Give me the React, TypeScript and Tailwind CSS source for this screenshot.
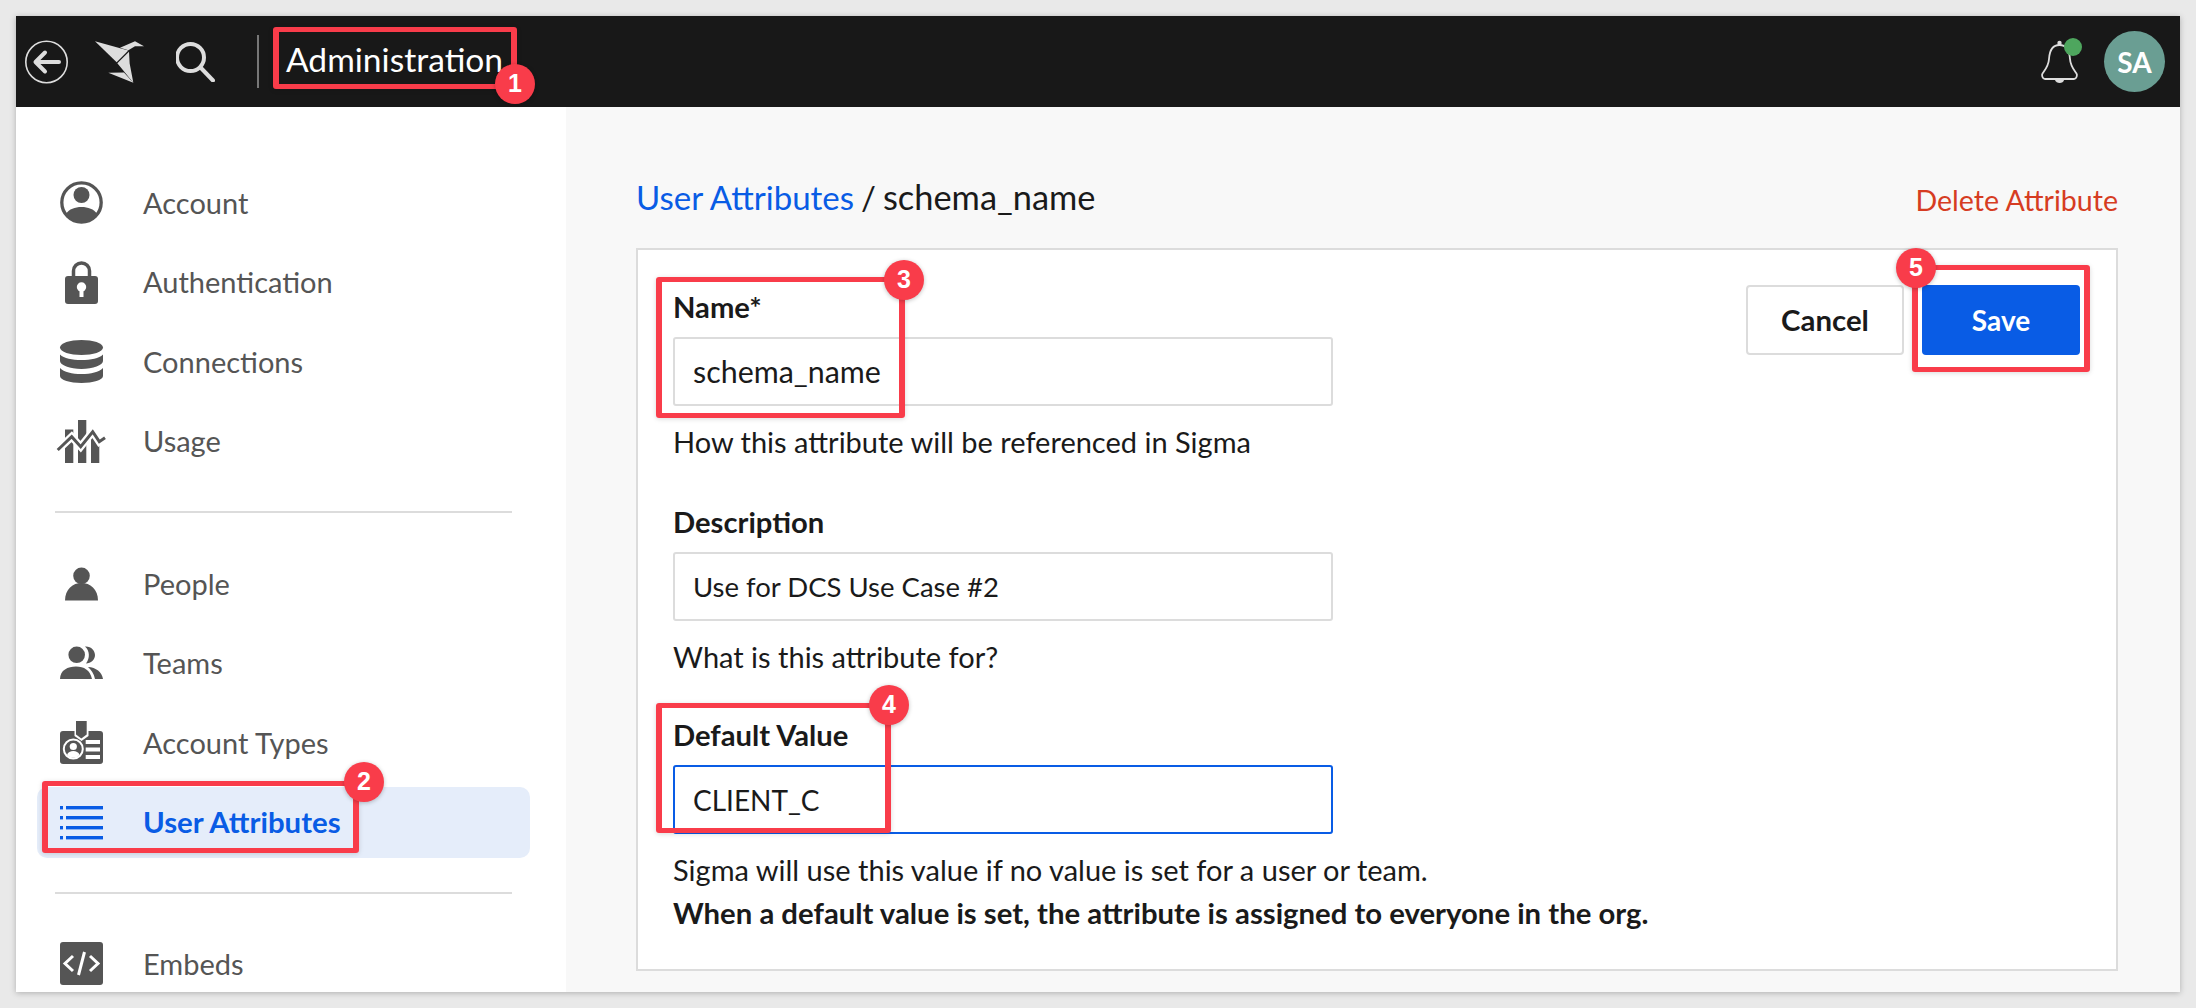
import React from "react";

const I = ({ children }: { children: React.ReactNode }) => (
  <svg width="43" height="43" viewBox="0 0 43 43" fill="currentColor" className="shrink-0 overflow-visible">
    {children}
  </svg>
);

const AccountIcon = () => (
  <I>
    <circle cx="21.5" cy="21.5" r="19.7" fill="none" stroke="currentColor" strokeWidth="3.3" />
    <circle cx="21.5" cy="14" r="8" />
    <path d="M6 33 C9 28 15 26 21.5 26 S34 28 37 33 A19 19 0 0 1 6 33Z" />
  </I>
);
const LockIcon = () => (
  <I>
    <path d="M13.5 18 V10 A8 8 0 0 1 29.5 10 V18" fill="none" stroke="currentColor" strokeWidth="3.5" />
    <rect x="5" y="15" width="33" height="28" rx="3" />
    <circle cx="21.5" cy="26" r="4.7" fill="#fff" />
    <rect x="19.5" y="27" width="4" height="9" fill="#fff" />
  </I>
);
const DbIcon = () => (
  <I>
    <path d="M0 7.5 C0 3 10 0 21.5 0 S43 3 43 7.5 S33 15 21.5 15 S0 12 0 7.5Z" />
    <path d="M0 14.5 C4 18.5 12 20 21.5 20 S39 18.5 43 14.5 V21 C43 25 33 29 21.5 29 S0 25 0 21Z" />
    <path d="M0 28 C4 32 12 34 21.5 34 S39 32 43 28 V36 C43 40 33 43 21.5 43 S0 40 0 36Z" />
  </I>
);
const UsageIcon = () => (
  <I>
    <rect x="5" y="9.5" width="8.3" height="33.5" />
    <rect x="18" y="0" width="8.3" height="43" />
    <rect x="31" y="17" width="8.3" height="26" />
    <path d="M-2.3 30 L11.7 16.7 L20.7 26.7 L32.7 11.7 L39.3 21.7 L45 17.7" fill="none" stroke="#fff" strokeWidth="7.5" />
    <path d="M-2.3 30 L11.7 16.7 L20.7 26.7 L32.7 11.7 L39.3 21.7 L45 17.7" fill="none" stroke="currentColor" strokeWidth="3" />
  </I>
);
const PersonIcon = () => (
  <I>
    <circle cx="21.5" cy="13.8" r="8.3" />
    <path d="M5 38.5 C5 27 13 21 21.5 21 S38 27 38 38.5Z" />
  </I>
);
const TeamsIcon = () => (
  <I>
    <circle cx="16.7" cy="12.8" r="8.3" />
    <path d="M25 4.5 C31 4 35 8.5 35 13 C35 17.5 31 21.5 26 21.5 C30 16 30 9 25 4.5Z" />
    <path d="M0 37 C0 28 8 24.5 16 24.5 S30 28 32 37Z" />
    <path d="M35 37 C34 31.5 31 27.5 28 25 C36 25.5 42 30 43 37Z" />
  </I>
);
const TypesIcon = () => (
  <I>
    <rect x="0" y="10" width="43" height="33" rx="3" />
    <path d="M14.5 8 V15 L21.5 20 L28.5 15 V8Z" fill="#fff" />
    <path d="M16 0 H26.7 V13.5 L21.3 17.5 L16 13.5Z" />
    <circle cx="13.3" cy="28" r="9.5" fill="none" stroke="#fff" strokeWidth="2" />
    <circle cx="13.3" cy="25.5" r="3.6" fill="#fff" />
    <path d="M7 34 C8 31 10.5 30 13.3 30 S18.5 31 19.6 34 A8.5 8.5 0 0 1 7 34Z" fill="#fff" />
    <rect x="25.7" y="19" width="14.3" height="4" fill="#fff" />
    <rect x="25.7" y="26.5" width="14.3" height="4" fill="#fff" />
    <rect x="25.7" y="34" width="14.3" height="4" fill="#fff" />
  </I>
);
const ListIcon = () => (
  <I>
    {[5, 15, 25, 35].map((y) => (
      <g key={y}>
        <rect x="0" y={y} width="3" height="3.4" />
        <rect x="6" y={y} width="37" height="3.4" />
      </g>
    ))}
  </I>
);
const EmbedIcon = () => (
  <I>
    <rect width="43" height="43" rx="3" />
    <path d="M13 14 L5 21.5 L13 29 M30 14 L38 21.5 L30 29 M24.5 10 L18.5 33" fill="none" stroke="#fff" strokeWidth="3" />
  </I>
);

const Row = ({ icon, label, active }: { icon: React.ReactNode; label: string; active?: boolean }) => (
  <div className="h-[79.5px] flex items-center">
    <div
      className={
        active
          ? "ml-[21px] w-[493px] h-[71px] pl-[23px] flex items-center gap-[40px] rounded-[10px] bg-[#e5edfa] text-[#095ce5] font-bold"
          : "ml-[21px] w-[493px] h-[71px] pl-[23px] flex items-center gap-[40px] text-[#555555]"
      }
    >
      {icon}
      <span className={active ? "text-[29.4px] leading-[42px]" : "text-[29px] leading-[42px]"}>{label}</span>
    </div>
  </div>
);

const Field = ({
  label,
  value,
  focus,
  className,
  valueClass,
  children,
}: {
  label: string;
  value: string;
  focus?: boolean;
  className?: string;
  valueClass: string;
  children: React.ReactNode;
}) => (
  <div className={className}>
    <div className="text-[29.2px] leading-[42px] font-bold text-[#1a1a1a]">{label}</div>
    <div
      className={
        (focus
          ? "mt-[9px] w-[660px] h-[69px] flex items-center pl-[18px] bg-white border-2 border-[#095ce5] rounded-[3px] text-[#1a1a1a] "
          : "mt-[9px] w-[660px] h-[69px] flex items-center pl-[18px] bg-white border-2 border-[#dcdcdc] rounded-[3px] text-[#1a1a1a] ") + valueClass
      }
    >
      {value}
    </div>
    <div className="mt-[15px] text-[29px] leading-[42px] text-[#1a1a1a]">{children}</div>
  </div>
);

const Badge = ({ n, className }: { n: number; className: string }) => (
  <div
    className={
      "absolute w-[40px] h-[40px] rounded-full bg-[#f93c4a] text-white flex items-center justify-center text-[25px] font-bold shadow-[0_1px_4px_rgba(0,0,0,0.25)] " +
      className
    }
    style={{ fontFamily: '"Liberation Sans", Arial, sans-serif' }}
  >
    {n}
  </div>
);

const boxCls =
  "absolute border-y-[5px] border-x-[6px] border-[#f93c4a] rounded-[3px] shadow-[0_1px_5px_rgba(0,0,0,0.15)] ";

export default function App() {
  return (
    <div
      className="relative w-[2196px] h-[1008px] overflow-hidden bg-[#e9e9e9] p-4"
      style={{ fontFamily: 'Lato, "Noto Sans", sans-serif' }}
    >
      <div className="w-[2164px] h-[976px] flex flex-col overflow-hidden shadow-[0_1px_6px_rgba(0,0,0,0.25)]">
        <header className="h-[91px] shrink-0 bg-[#181818] flex items-center pl-[9px] pr-[15px] text-[#dddddd]">
          <svg width="43" height="44" viewBox="0 0 43 44" fill="none" stroke="currentColor" className="shrink-0">
            <circle cx="21.5" cy="22" r="20.7" strokeWidth="1.6" />
            <path d="M34 22 H11 M20 12.5 L10.5 22 L20 31.5" strokeWidth="4" strokeLinecap="round" strokeLinejoin="round" />
          </svg>
          <svg width="49" height="42" viewBox="285 115 147 125" fill="currentColor" className="ml-[27px] shrink-0">
            <path d="M285 115 L385 143 L350 178Z" />
            <path d="M360 135 L405 115 L432 130 L405 130 L385 142Z" />
            <path d="M387 147 L352 181 L400 240 L389 182Z" />
            <path d="M325 210 L372 209 L400 240Z" />
          </svg>
          <svg width="39" height="40" viewBox="0 0 39 40" fill="none" stroke="currentColor" className="ml-[32px] shrink-0">
            <circle cx="14.5" cy="15.5" r="13.5" strokeWidth="4" />
            <path d="M25 26 L37 38.5" strokeWidth="4" strokeLinecap="round" />
          </svg>
          <div className="ml-[42px] w-[2px] h-[53px] bg-[#777777] shrink-0" />
          <div className="ml-[27px] mb-[6px] text-[33.6px] leading-[42px] text-white">Administration</div>
          <svg width="37" height="44" viewBox="0 0 37 44" fill="none" stroke="currentColor" strokeWidth="1.8" className="ml-auto shrink-0 overflow-visible">
            <path d="M18.5 5 C11 5 8.5 11 8 19 C7.6 26 4 30 1.5 33.5 C0.5 35 1.3 39 4 39 H33 C35.7 39 36.5 35 35.5 33.5 C33 30 29.4 26 29 19 C28.5 11 26 5 18.5 5Z" />
            <circle cx="18.5" cy="3" r="2.2" fill="currentColor" stroke="none" />
            <path d="M14 40 H23 C22.5 44 15 44 14 40Z" fill="currentColor" stroke="none" />
            <circle cx="32" cy="7" r="9" fill="#4ea65e" stroke="none" />
          </svg>
          <div className="ml-[26px] w-[61px] h-[61px] rounded-full bg-[#6a9e93] flex items-center justify-center text-white font-bold text-[28px]">
            SA
          </div>
        </header>

        <div className="flex-1 flex min-h-0">
          <aside className="w-[550px] shrink-0 bg-white pt-[56px] overflow-hidden">
            <Row icon={<AccountIcon />} label="Account" />
            <Row icon={<LockIcon />} label="Authentication" />
            <Row icon={<DbIcon />} label="Connections" />
            <Row icon={<UsageIcon />} label="Usage" />
            <div className="ml-[39px] w-[457px] h-[2px] bg-[#dcdcdc] mt-[30px] mb-[31px]" />
            <Row icon={<PersonIcon />} label="People" />
            <Row icon={<TeamsIcon />} label="Teams" />
            <Row icon={<TypesIcon />} label="Account Types" />
            <Row icon={<ListIcon />} label="User Attributes" active />
            <div className="ml-[39px] w-[457px] h-[2px] bg-[#dcdcdc] mt-[30px] mb-[30px]" />
            <Row icon={<EmbedIcon />} label="Embeds" />
          </aside>

          <main className="flex-1 bg-[#f8f8f8] pl-[70px] pr-[62px]">
            <div className="h-[141px] pt-[69px] flex justify-between items-start">
              <div className="flex gap-[7px] leading-[42px] text-[#1a1a1a] text-[33px]">
                <span className="text-[#095ce5]">User Attributes</span>
                <span>/</span>
                <span className="text-[34.4px]">schema_name</span>
              </div>
              <div className="mt-[3px] text-[28.6px] leading-[42px] text-[#d63c22]">Delete Attribute</div>
            </div>
            <section className="h-[723px] bg-white border-2 border-[#dcdcdc] pl-[35px] pr-[36px] pt-[36px] flex justify-between items-start">
              <div>
                <Field label="Name*" value="schema_name" valueClass="text-[30.4px]">
                  How this attribute will be referenced in Sigma
                </Field>
                <Field label="Description" value="Use for DCS Use Case #2" valueClass="text-[27.5px]" className="mt-[38px]">
                  What is this attribute for?
                </Field>
                <Field label="Default Value" value="CLIENT_C" valueClass="text-[28px]" focus className="mt-[36px]">
                  <div>Sigma will use this value if no value is set for a user or team.</div>
                  <div className="mt-px font-bold text-[29.3px]">When a default value is set, the attribute is assigned to everyone in the org.</div>
                </Field>
              </div>
              <div className="flex gap-[18px] -mt-px">
                <div className="w-[158px] h-[70px] flex items-center justify-center bg-white border-2 border-[#dcdcdc] rounded-[4px] text-[29.4px] font-bold text-[#1a1a1a]">
                  Cancel
                </div>
                <div className="w-[158px] h-[70px] flex items-center justify-center bg-[#095ce5] rounded-[4px] text-[28px] font-bold text-white">
                  Save
                </div>
              </div>
            </section>
          </main>
        </div>
      </div>

      <div className={boxCls + "left-[273px] top-[27px] w-[244px] h-[62px]"} />
      <Badge n={1} className="left-[495px] top-[64px]" />
      <div className={boxCls + "left-[42px] top-[781px] w-[317px] h-[72px]"} />
      <Badge n={2} className="left-[344px] top-[762px]" />
      <div className={boxCls + "left-[656px] top-[277px] w-[249px] h-[141px]"} />
      <Badge n={3} className="left-[884px] top-[260px]" />
      <div className={boxCls + "left-[656px] top-[703px] w-[235px] h-[130px]"} />
      <Badge n={4} className="left-[869px] top-[685px]" />
      <div className={boxCls + "left-[1912px] top-[265px] w-[178px] h-[107px]"} />
      <Badge n={5} className="left-[1896px] top-[248px]" />
    </div>
  );
}
